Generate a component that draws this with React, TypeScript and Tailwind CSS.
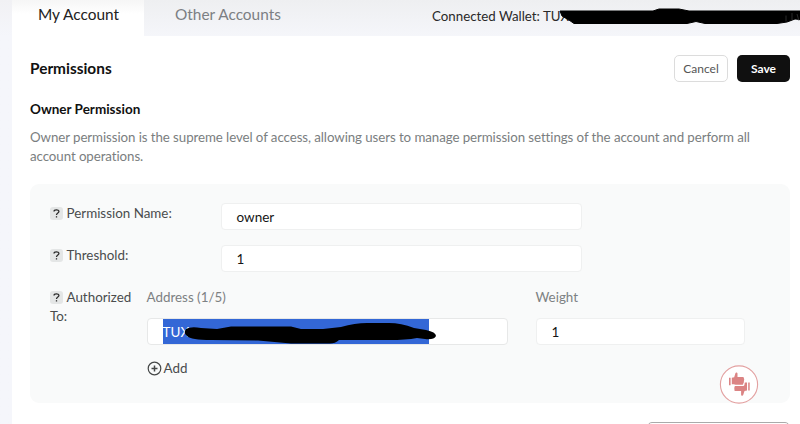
import type { ReactNode } from "react";

function Help() {
  return (
    <span className="mr-[3.5px] inline-flex h-[13px] w-[13px] items-center justify-center rounded-[3px] bg-[#e4e6e6]">
      <svg width="7" height="9" viewBox="0 0 7 9" fill="none" stroke="#2a2a2a" strokeWidth="1.3">
        <path d="M1 2.6C1 .3 5.9.2 5.9 2.6 5.9 4.1 3.5 4 3.5 6" />
        <path d="M3.5 7.2v1.3" />
      </svg>
    </span>
  );
}

function Field({ children, className }: { children: ReactNode; className: string }) {
  return (
    <div className={`flex h-[27px] items-center rounded-[4px] border bg-white pl-[15px] text-[13.5px] text-[#151515] ${className}`}>
      {children}
    </div>
  );
}

function ThumbsBadge() {
  return (
    <svg className="absolute left-[719px] top-[365px]" width="40" height="40" viewBox="0 0 40 40">
      <circle cx="20" cy="19.5" r="18.6" fill="#fff" stroke="#e3a1a1" strokeWidth="1.1" />
      <g fill="#db8484">
        <path d="M10 12.8h1.6v7.4H10zM12.8 12.8l2.4-.6 1.3-4.2c.4-1 2-.7 2 .6v3.4h5.2c1.1 0 1.5.8 1.2 1.6.5.5.4 1.3 0 1.6.4.6.2 1.3-.2 1.6.3.7 0 1.2-.4 1.5.2.9-.3 1.5-1.2 1.5h-6.5l-1.8-.6h-2z" />
        <path d="M29.2 17.6h1.5v8h-1.5zM25.9 17.5h2.1v8.1l-2.5.5-1.3 4c-.5 1.2-2.2.8-2.1-.6v-3.4h-5.4c-1.2 0-1.6-.9-1.2-1.6-.4-.5-.4-1.1 0-1.5-.3-.6-.1-1.2.3-1.5v-.4h7.6c1.7 0 2.3-1.1 2.1-2.1z" />
      </g>
    </svg>
  );
}

export default function App() {
  return (
    <div className="relative flex h-[424px] w-[800px] overflow-hidden bg-white font-['Lato',sans-serif] text-[#4a4c4d] [font-variant-ligatures:none]">
      <div className="w-[12px] shrink-0 bg-linear-to-b from-[#f1f1f4] to-[#f5f6fb] to-[36px]" />
      <main className="flex min-w-0 flex-1 flex-col">
        <header className="flex h-[36px] shrink-0 bg-linear-to-b from-[#eeeff1] to-[#f5f6fa]">
          <div className="w-[132px] bg-linear-to-b from-[#f6f6f6] to-white to-[14px] pl-[26px] pt-[3px] text-[15.4px] leading-[22px] text-[#222]">My Account</div>
          <div className="w-[276px] pl-[31px] pt-[3px] text-[15.4px] leading-[22px] text-[#7c7f83]">Other Accounts</div>
          <div className="whitespace-nowrap pl-[12px] pt-[6px] text-[13.3px] leading-[20px] text-[#292929]">Connected Wallet: TUX</div>
        </header>

        <section className="pl-[18px] pr-[10px]">
          <div className="flex h-[64px] items-center justify-between pt-[1px]">
            <h1 className="text-[15.4px] font-bold text-[#111]">Permissions</h1>
            <div className="flex gap-[9px] text-[12px]">
              <button className="h-[27px] w-[54px] rounded-[5px] border border-[#dcdcdc] bg-white text-[#555]">Cancel</button>
              <button className="h-[27px] w-[53px] rounded-[5px] bg-[#101010] font-bold text-white">Save</button>
            </div>
          </div>
          <h2 className="text-[13.5px] font-bold leading-[18px] text-[#111]">Owner Permission</h2>
          <p className="mt-[10px] whitespace-nowrap text-[13.3px] leading-[19px] tracking-[-0.077px] text-[#7a7e80]">
            Owner permission is the supreme level of access, allowing users to manage permission settings of the account and perform all
            <br />
            account operations.
          </p>

          <div className="mt-[18px] h-[219px] rounded-[9px] bg-[#f9fafa] pl-[20px] pt-[19px] text-[13.4px]">
            <div className="flex h-[42px]">
              <div className="flex h-[20px] w-[170.5px] items-center"><Help />Permission Name:</div>
              <Field className="w-[361px] border-[#eff0f0] pt-[1px]">owner</Field>
            </div>
            <div className="flex h-[42px]">
              <div className="flex h-[20px] w-[170.5px] items-center"><Help />Threshold:</div>
              <Field className="w-[361px] border-[#eff0f0] pt-[1px]">1</Field>
            </div>
            <div className="flex">
              <div className="w-[96.5px] leading-[19px]">
                <div className="flex h-[20px] items-center"><Help />Authorized</div>
                To:
              </div>
              <div className="w-[389px]">
                <div className="h-[31px] leading-[20px] text-[#7d8183]">Address (1/5)</div>
                <Field className="w-[361px] border-[#e7e8e8]">
                  <span className="flex h-[25px] w-[266px] items-center bg-[#3367d6] pt-[1px] text-white">TUX</span>
                </Field>
                <div className="mt-[13px] flex h-[20px] items-center gap-[2px]">
                  <svg width="15" height="15" viewBox="0 0 15 15" fill="none" stroke="#454747" strokeWidth="1.2">
                    <circle cx="7.5" cy="7.5" r="6.3" />
                    <path d="M4.5 7.5h6M7.5 4.5v6" strokeWidth="1.5" />
                  </svg>
                  Add
                </div>
              </div>
              <div>
                <div className="h-[31px] leading-[20px] text-[#7d8183]">Weight</div>
                <Field className="w-[209px] border-[#eff0f0] pt-[1px]">1</Field>
              </div>
            </div>
          </div>
          <div className="ml-auto mt-[19px] h-[27px] w-[143px] rounded-[5px] border border-[#aaa]" />
        </section>
      </main>

      <svg className="absolute left-[555px] top-[6px]" width="245" height="22" viewBox="0 0 245 22">
        <path className="blur-[0.6px]" d="M5 5 31 5H98L104 3H124L134 5H250V14L240 13 232 16 222 17.5H150L141 15.5 132 17.5H19L14 14 7 10Z" fill="#000" stroke="#000" strokeLinejoin="round" />
        <path d="M231 9.5v6M237 7v7M242 8l2 7" stroke="#555" strokeWidth=".5" />
      </svg>
      <svg className="absolute left-[181px] top-[317px]" width="259" height="29" viewBox="0 0 259 29">
        <path className="blur-[0.6px]" d="M5 12Q10 9 20 11L36 12 50 9.5H110L120 12H142L160 10Q174 6 186 6H208Q220 6 233 11L245 13Q255 15 255 19 253 23 244 22L236 21Q225 23 208 23H158Q154 27 147 26.5H110L77 23.5 30 23Q10 23 6 19 2 16 5 12Z" fill="#000" />
      </svg>
      <ThumbsBadge />
    </div>
  );
}
